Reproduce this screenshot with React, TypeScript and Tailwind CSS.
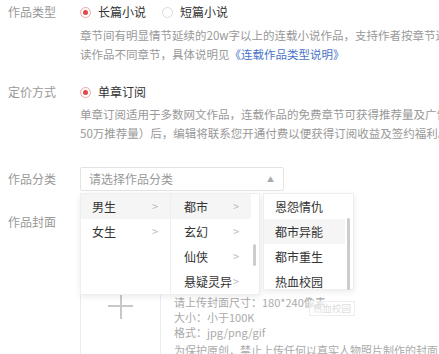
import React from "react";

const male = ["都市", "玄幻", "仙侠", "悬疑灵异"];
const sub = ["恩怨情仇", "都市异能", "都市重生", "热血校园"];

function Radio({ checked, label }: { checked?: boolean; label: string }) {
  return (
    <div className="flex items-center gap-[7px]">
      <span
        className={
          checked
            ? "w-[11px] h-[11px] rounded-full border border-[#f3a5a5] flex items-center justify-center"
            : "w-[11px] h-[11px] rounded-full border border-[#dcdcdc]"
        }
      >
        {checked && <span className="w-[5px] h-[5px] rounded-full bg-[#e54848]" />}
      </span>
      <span className="text-[12px] text-[#333]">{label}</span>
    </div>
  );
}

function Label({ text }: { text: string }) {
  return <div className="w-[72px] shrink-0 text-[12px] leading-[24px] text-[#999]">{text}</div>;
}

export default function App() {
  return (
    <div className="relative w-[439px] h-[354px] overflow-hidden bg-white font-['Noto_Sans_CJK_SC',sans-serif]">
      <div className="pl-2 flex flex-col">
        <div className="flex">
          <Label text="作品类型" />
          <div className="flex flex-col">
            <div className="flex items-center gap-[16px] h-[24px]">
              <Radio checked label="长篇小说" />
              <Radio label="短篇小说" />
            </div>
            <div className="mt-[2px] text-[11.5px] leading-[19px] text-[#999] whitespace-nowrap">
              <div>章节间有明显情节延续的20w字以上的连载小说作品，支持作者按章节进行更新</div>
              <div>
                读作品不同章节，具体说明见<span className="text-[#4a74c9]">《连载作品类型说明》</span>
              </div>
            </div>
          </div>
        </div>

        <div className="flex mt-[16px]">
          <Label text="定价方式" />
          <div className="flex flex-col">
            <div className="flex items-center h-[24px]">
              <Radio checked label="单章订阅" />
            </div>
            <div className="mt-[1px] text-[11.5px] leading-[19px] text-[#999] whitespace-nowrap">
              <div>单章订阅适用于多数网文作品，连载作品的免费章节可获得推荐量及广告收益</div>
              <div>50万推荐量）后，编辑将联系您开通付费以便获得订阅收益及签约福利。</div>
            </div>
          </div>
        </div>

        <div className="flex mt-[24px]">
          <Label text="作品分类" />
          <div className="w-[204px] h-[24px] border border-[#e3e3e3] rounded-[2px] flex items-center justify-between pl-[8px] pr-[9px]">
            <span className="text-[12px] text-[#999]">请选择作品分类</span>
            <span className="text-[7px] text-[#aaa]">▲</span>
          </div>
        </div>

        <div className="flex mt-[19px]">
          <Label text="作品封面" />
          <div className="flex">
            <div className="w-[81px] h-[192px] border border-[#ececec] flex items-center justify-center">
              <div className="relative w-[25px] h-[25px]">
                <div className="absolute left-0 top-[11.5px] w-[25px] h-[2px] bg-[#c8c8c8]" />
                <div className="absolute top-0 left-[11.5px] w-[2px] h-[25px] bg-[#c8c8c8]" />
              </div>
            </div>
            <div className="ml-[13px] mt-[85px] text-[11px] leading-[15px] text-[#aaa] whitespace-nowrap">
              <div>请上传封面尺寸：180*240像素</div>
              <div>大小：小于100K</div>
              <div>格式：jpg/png/gif</div>
              <div className="mt-[3px]">为保护原创，禁止上传任何以真实人物照片制作的封面</div>
            </div>
          </div>
        </div>
      </div>

      {/* cascader dropdown */}
      <div className="absolute left-[80px] top-[193px] flex gap-[3px] text-[12px] text-[#333]">
        <div className="flex bg-white border border-[#eee] shadow-[0_2px_6px_rgba(0,0,0,0.08)]">
          <div className="w-[90px] h-[100px] border-r border-[#eee]">
            <div className="h-[25px] flex items-center justify-between pl-[11px] pr-[12px] bg-[#f5f5f5]">
              <span>男生</span>
              <span className="text-[#bbb] text-[11px]">&gt;</span>
            </div>
            <div className="h-[25px] flex items-center justify-between pl-[11px] pr-[12px]">
              <span>女生</span>
              <span className="text-[#bbb] text-[11px]">&gt;</span>
            </div>
          </div>
          <div className="relative w-[88px] h-[100px]">
            {male.map((m, i) => (
              <div
                key={m}
                className={
                  i === 0
                    ? "h-[25px] w-[80px] flex items-center justify-between pl-[13px] pr-[12px] bg-[#f5f5f5]"
                    : "h-[25px] w-[80px] flex items-center justify-between pl-[13px] pr-[12px]"
                }
              >
                <span>{m}</span>
                <span className="text-[#bbb] text-[11px]">&gt;</span>
              </div>
            ))}
            <div className="absolute right-[3px] top-[50px] w-[3px] h-[22px] rounded-full bg-[#ccc]" />
          </div>
        </div>
        <div className="relative w-[91px] h-[97px] bg-white border border-[#eee] shadow-[0_2px_6px_rgba(0,0,0,0.08)]">
          {sub.map((s, i) => (
            <div
              key={s}
              className={
                i === 1
                  ? "h-[25px] w-[81px] flex items-center pl-[11px] bg-[#f5f5f5]"
                  : "h-[25px] w-[81px] flex items-center pl-[11px]"
              }
            >
              {s}
            </div>
          ))}
          <div className="absolute right-[3px] top-[24px] w-[3px] h-[72px] rounded-full bg-[#ccc]" />
        </div>
      </div>

      {/* drag ghost */}
      <div className="absolute left-[309px] top-[301px] px-[3px] h-[15px] flex items-center border border-[#eee] bg-white/60 text-[9.5px] text-[#ddd]">
        热血校园
      </div>
    </div>
  );
}
